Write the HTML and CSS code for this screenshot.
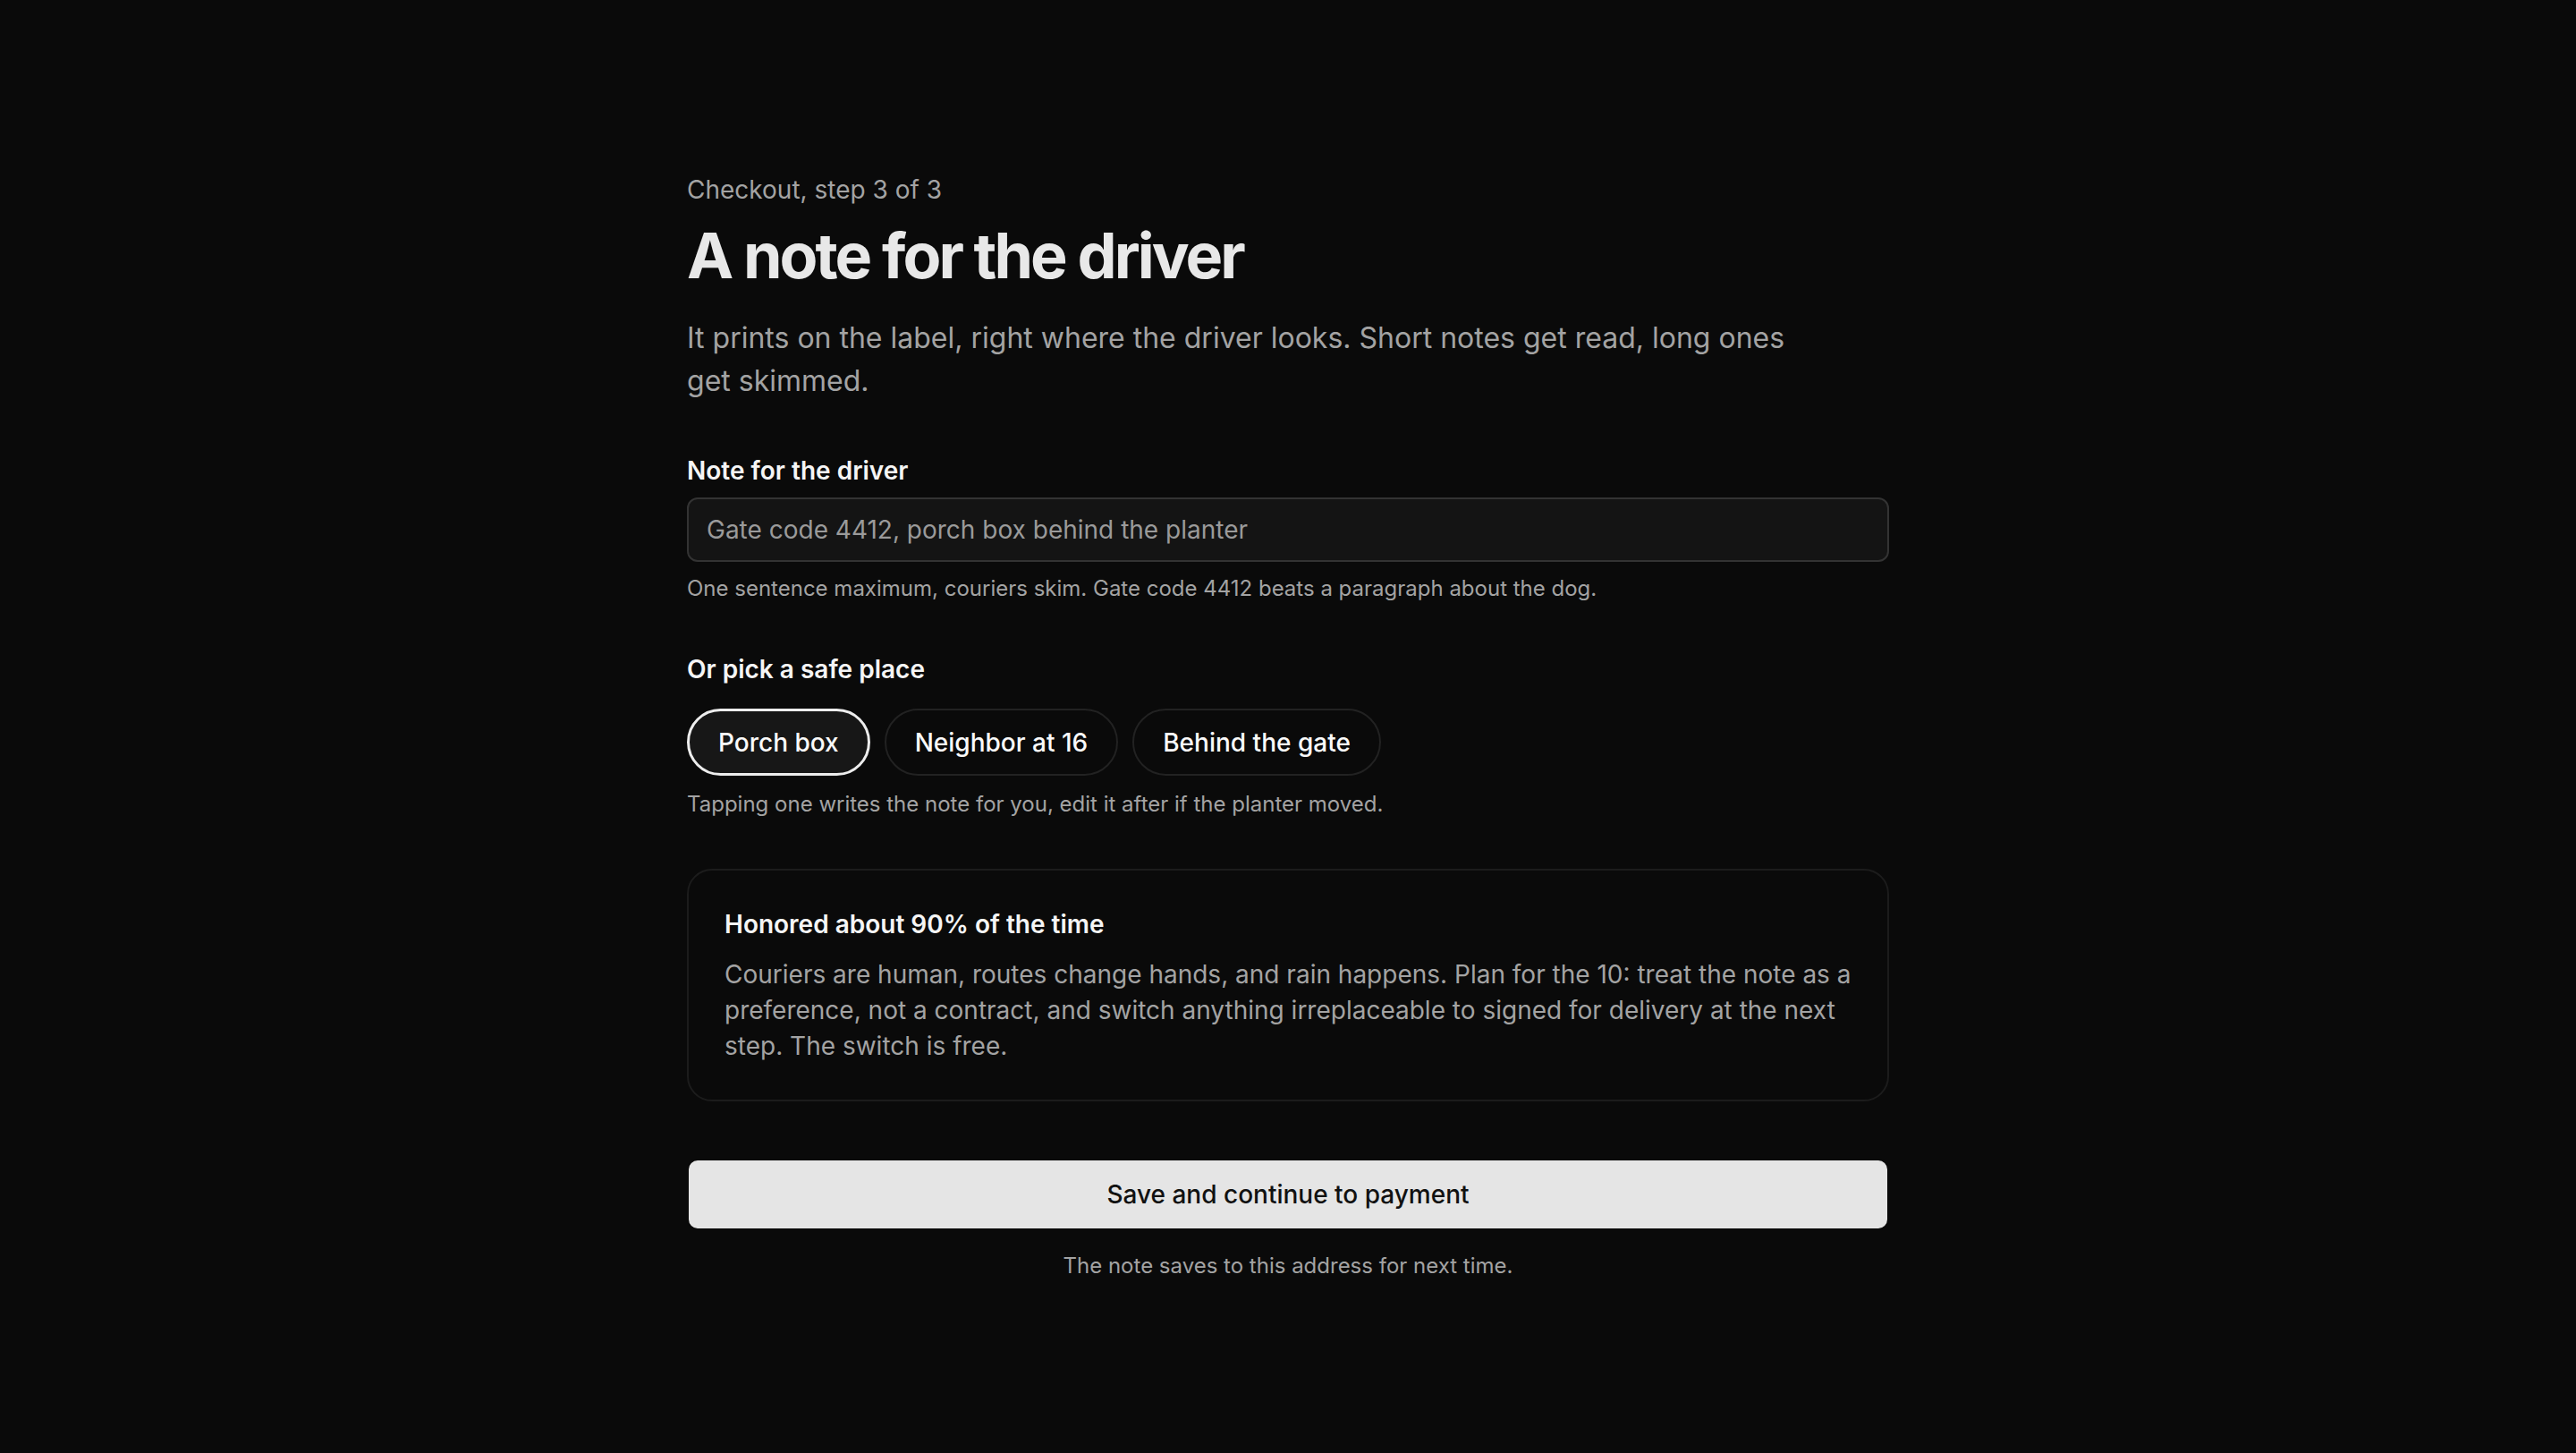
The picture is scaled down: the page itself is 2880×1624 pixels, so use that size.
FILE: index.html
```html
<!DOCTYPE html>
<html lang="en">

<head>
    <meta charset="UTF-8">
    <meta name="viewport" content="width=device-width, initial-scale=1.0">
    <title>Checkout - Note for the driver</title>
    <link rel="stylesheet" href="styles.css">
</head>

<body>
    <div class="page">
        <p class="step">Checkout, step 3 of 3</p>
        <h1 class="title">A note for the driver</h1>
        <p class="lead">It prints on the label, right where the driver looks. Short notes get read, long ones get skimmed.</p>

        <div class="field">
            <label class="label" for="note">Note for the driver</label>
            <input class="input" id="note" type="text" placeholder="Gate code 4412, porch box behind the planter">
            <p class="hint">One sentence maximum, couriers skim. Gate code 4412 beats a paragraph about the dog.</p>
        </div>

        <div class="field places">
            <div class="label">Or pick a safe place</div>
            <div class="chips">
                <button class="chip active">Porch box</button>
                <button class="chip">Neighbor at 16</button>
                <button class="chip">Behind the gate</button>
            </div>
            <p class="hint">Tapping one writes the note for you, edit it after if the planter moved.</p>
        </div>

        <div class="card">
            <h2 class="card-title">Honored about 90% of the time</h2>
            <p class="card-text">Couriers are human, routes change hands, and rain happens. Plan for the 10: treat the note as a preference, not a contract, and switch anything irreplaceable to signed for delivery at the next step. The switch is free.</p>
        </div>

        <button class="submit">Save and continue to payment</button>
        <p class="footnote">The note saves to this address for next time.</p>
    </div>
</body>

</html>
```

FILE: styles.css
```css
* {
    margin: 0;
    padding: 0;
    box-sizing: border-box;
}

body {
    background-color: #0a0a0a;
    color: #ededed;
    font-family: Inter, "Noto Sans", sans-serif;
}

.page {
    width: 1344px;
    margin: 0 auto;
    padding: 192px 0 120px;
}

.step {
    font-size: 28px;
    line-height: 40px;
    color: #a3a3a3;
}

.title {
    margin-top: 14px;
    font-size: 70px;
    line-height: 80px;
    font-weight: 700;
    letter-spacing: -0.042em;
    color: #e8e8e8;
}

.lead {
    margin-top: 28px;
    max-width: 1240px;
    font-size: 32px;
    line-height: 48px;
    color: #a3a3a3;
}

.field {
    margin-top: 56px;
}

.field.places {
    margin-top: 52px;
}

.label {
    display: block;
    font-size: 28px;
    line-height: 40px;
    font-weight: 600;
    color: #f5f5f5;
}

.input {
    display: block;
    width: 100%;
    height: 72px;
    margin-top: 10px;
    padding: 0 20px;
    background-color: #141414;
    border: 2px solid #333;
    border-radius: 12px;
    font-family: inherit;
    font-size: 28px;
    color: #ededed;
    outline: none;
}

.input::placeholder {
    color: #9a9a9a;
}

.hint {
    margin-top: 12px;
    font-size: 24px;
    line-height: 36px;
    color: #a3a3a3;
}

.chips {
    display: flex;
    gap: 16px;
    margin-top: 24px;
}

.chips + .hint {
    margin-top: 14px;
}

.chip {
    height: 75px;
    padding: 0 32px;
    background-color: transparent;
    border: 2px solid #222;
    border-radius: 999px;
    font-family: inherit;
    font-size: 28px;
    font-weight: 500;
    color: #fafafa;
    cursor: pointer;
}

.chip.active {
    background-color: #171717;
    border: 3px solid #ededed;
}

.card {
    margin-top: 54px;
    padding: 40px 38px 40px 40px;
    border: 2px solid #1c1c1c;
    border-radius: 28px;
}

.card-title {
    font-size: 28px;
    line-height: 40px;
    font-weight: 600;
    color: #f5f5f5;
}

.card-text {
    margin-top: 16px;
    font-size: 28px;
    line-height: 40px;
    color: #a3a3a3;
}

.submit {
    display: block;
    width: 100%;
    height: 80px;
    margin-top: 64px;
    background-color: #e5e5e5;
    border: 2px solid #0a0a0a;
    border-radius: 12px;
    font-family: inherit;
    font-size: 28px;
    font-weight: 500;
    color: #111;
    cursor: pointer;
}

.footnote {
    margin-top: 22px;
    text-align: center;
    font-size: 24px;
    line-height: 36px;
    color: #a3a3a3;
}
```
